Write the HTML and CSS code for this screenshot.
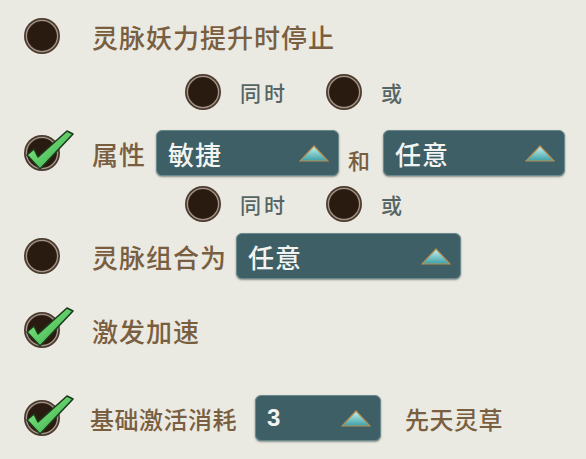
FILE: index.html
```html
<!DOCTYPE html>
<html lang="zh-CN">
<head>
    <meta charset="UTF-8" />
    <meta name="viewport" content="width=device-width, initial-scale=1">
    <title>灵脉设置</title>
    <link rel="stylesheet" href="styles.css">
</head>
<body>
    <svg width="0" height="0" class="defs">
        <defs>
            <linearGradient id="triFill" x1="0" y1="0" x2="0" y2="1">
                <stop offset="0" stop-color="#c8f4ee"/>
                <stop offset="1" stop-color="#3c9fa8"/>
            </linearGradient>
            <linearGradient id="checkFill" x1="0" y1="0" x2="1" y2="1">
                <stop offset="0" stop-color="#8ff08a"/>
                <stop offset="1" stop-color="#2fa845"/>
            </linearGradient>
        </defs>
    </svg>

    <div class="panel">
        <div class="row r1">
            <span class="radio"><svg viewBox="0 0 36 36"><circle cx="18" cy="18" r="18" fill="#4b3b2f"/><circle cx="18" cy="18" r="15.6" fill="none" stroke="#a4948a" stroke-width="1.3"/><circle cx="18" cy="18" r="14.6" fill="#2a1b11"/></svg></span>
            <span class="label">灵脉妖力提升时停止</span>
        </div>

        <div class="row sub r2">
            <span class="radio"><svg viewBox="0 0 36 36"><circle cx="18" cy="18" r="18" fill="#4b3b2f"/><circle cx="18" cy="18" r="15.6" fill="none" stroke="#a4948a" stroke-width="1.3"/><circle cx="18" cy="18" r="14.6" fill="#2a1b11"/></svg></span>
            <span class="sub-label">同时</span>
            <span class="radio second"><svg viewBox="0 0 36 36"><circle cx="18" cy="18" r="18" fill="#4b3b2f"/><circle cx="18" cy="18" r="15.6" fill="none" stroke="#a4948a" stroke-width="1.3"/><circle cx="18" cy="18" r="14.6" fill="#2a1b11"/></svg></span>
            <span class="sub-label">或</span>
        </div>

        <div class="row r3">
            <span class="radio checked"><svg viewBox="0 0 36 36"><circle cx="18" cy="18" r="18" fill="#4b3b2f"/><circle cx="18" cy="18" r="15.6" fill="none" stroke="#a4948a" stroke-width="1.3"/><circle cx="18" cy="18" r="14.6" fill="#2a1b11"/><path d="M3 20 L10 14 L14 22 L43 -4 L49 -1 L16 34 Z" fill="url(#checkFill)" stroke="#1d3a1c" stroke-width="1.6" stroke-linejoin="round"/></svg></span>
            <span class="label">属性</span>
            <div class="select w1"><span>敏捷</span><svg class="tri" viewBox="0 0 30 17"><polygon points="15,1 29,16 1,16" fill="url(#triFill)" stroke="#b98f52" stroke-width="1.2"/></svg></div>
            <span class="joiner">和</span>
            <div class="select w2"><span>任意</span><svg class="tri" viewBox="0 0 30 17"><polygon points="15,1 29,16 1,16" fill="url(#triFill)" stroke="#b98f52" stroke-width="1.2"/></svg></div>
        </div>

        <div class="row sub r4">
            <span class="radio"><svg viewBox="0 0 36 36"><circle cx="18" cy="18" r="18" fill="#4b3b2f"/><circle cx="18" cy="18" r="15.6" fill="none" stroke="#a4948a" stroke-width="1.3"/><circle cx="18" cy="18" r="14.6" fill="#2a1b11"/></svg></span>
            <span class="sub-label">同时</span>
            <span class="radio second"><svg viewBox="0 0 36 36"><circle cx="18" cy="18" r="18" fill="#4b3b2f"/><circle cx="18" cy="18" r="15.6" fill="none" stroke="#a4948a" stroke-width="1.3"/><circle cx="18" cy="18" r="14.6" fill="#2a1b11"/></svg></span>
            <span class="sub-label">或</span>
        </div>

        <div class="row r5">
            <span class="radio"><svg viewBox="0 0 36 36"><circle cx="18" cy="18" r="18" fill="#4b3b2f"/><circle cx="18" cy="18" r="15.6" fill="none" stroke="#a4948a" stroke-width="1.3"/><circle cx="18" cy="18" r="14.6" fill="#2a1b11"/></svg></span>
            <span class="label">灵脉组合为</span>
            <div class="select w3"><span>任意</span><svg class="tri" viewBox="0 0 30 17"><polygon points="15,1 29,16 1,16" fill="url(#triFill)" stroke="#b98f52" stroke-width="1.2"/></svg></div>
        </div>

        <div class="row r6">
            <span class="radio checked"><svg viewBox="0 0 36 36"><circle cx="18" cy="18" r="18" fill="#4b3b2f"/><circle cx="18" cy="18" r="15.6" fill="none" stroke="#a4948a" stroke-width="1.3"/><circle cx="18" cy="18" r="14.6" fill="#2a1b11"/><path d="M3 20 L10 14 L14 22 L43 -4 L49 -1 L16 34 Z" fill="url(#checkFill)" stroke="#1d3a1c" stroke-width="1.6" stroke-linejoin="round"/></svg></span>
            <span class="label">激发加速</span>
        </div>

        <div class="row r7">
            <span class="radio checked"><svg viewBox="0 0 36 36"><circle cx="18" cy="18" r="18" fill="#4b3b2f"/><circle cx="18" cy="18" r="15.6" fill="none" stroke="#a4948a" stroke-width="1.3"/><circle cx="18" cy="18" r="14.6" fill="#2a1b11"/><path d="M3 20 L10 14 L14 22 L43 -4 L49 -1 L16 34 Z" fill="url(#checkFill)" stroke="#1d3a1c" stroke-width="1.6" stroke-linejoin="round"/></svg></span>
            <span class="label small">基础激活消耗</span>
            <div class="select w4"><span class="num">3</span><svg class="tri" viewBox="0 0 30 17"><polygon points="15,1 29,16 1,16" fill="url(#triFill)" stroke="#b98f52" stroke-width="1.2"/></svg></div>
            <span class="label small after">先天灵草</span>
        </div>
    </div>
</body>
</html>
```

FILE: styles.css
```css
* { box-sizing: border-box; }
body {
    margin: 0;
    background: #eaeae2;
    font-family: 'Noto Sans CJK SC', 'Noto Sans', sans-serif;
    width: 586px;
    height: 459px;
    overflow: hidden;
}
.defs {
    position: absolute;
}
.panel {
    display: flex;
    flex-direction: column;
    padding-left: 24px;
}
.row {
    display: flex;
    align-items: center;
    height: 50px;
}
.r1 { margin-top: 11px; }
.r2 { margin-top: 6px; }
.r3 { margin-top: 11px; }
.r4 { margin-top: 1px; }
.r5 { margin-top: 2px; }
.r6 { margin-top: 24px; }
.r7 { margin-top: 38px; }

.radio {
    width: 36px;
    height: 36px;
    flex-shrink: 0;
    display: flex;
}
.radio svg {
    width: 36px;
    height: 36px;
    overflow: visible;
}
.label {
    margin-left: 32px;
    font-size: 26px;
    letter-spacing: 1px;
    color: #7a5e40;
    font-weight: 500;
    white-space: nowrap;
}
.label.small {
    margin-left: 30px;
    font-size: 24px;
    letter-spacing: 0.5px;
}
.label.after {
    margin-left: 24px;
}
.sub {
    padding-left: 161px;
}
.sub-label {
    margin-left: 19px;
    font-size: 21px;
    letter-spacing: 3px;
    color: #566564;
    font-weight: 500;
}
.radio.second {
    margin-left: 38px;
}
.joiner {
    margin: 12px 13px 0 9px;
    font-size: 22px;
    font-weight: 500;
    color: #7a5e40;
}
.select {
    height: 46px;
    background: #3e5f66;
    border: 1px solid #6a8a8e;
    border-radius: 6px;
    box-shadow: 0 1px 2px rgba(40, 50, 50, 0.5);
    display: flex;
    align-items: center;
    justify-content: space-between;
    padding: 0 9px 0 11px;
    color: #f2f4f2;
    font-size: 26px;
    font-weight: 500;
    letter-spacing: 1px;
}
.select .num {
    font-family: 'Liberation Sans', sans-serif;
    font-size: 24px;
    font-weight: bold;
}
.w1 { width: 183px; margin-left: 10px; }
.w2 { width: 182px; }
.w3 { width: 225px; margin-left: 9px; }
.w4 { width: 126px; margin-left: 18px; }
.tri {
    width: 30px;
    height: 17px;
}
```
